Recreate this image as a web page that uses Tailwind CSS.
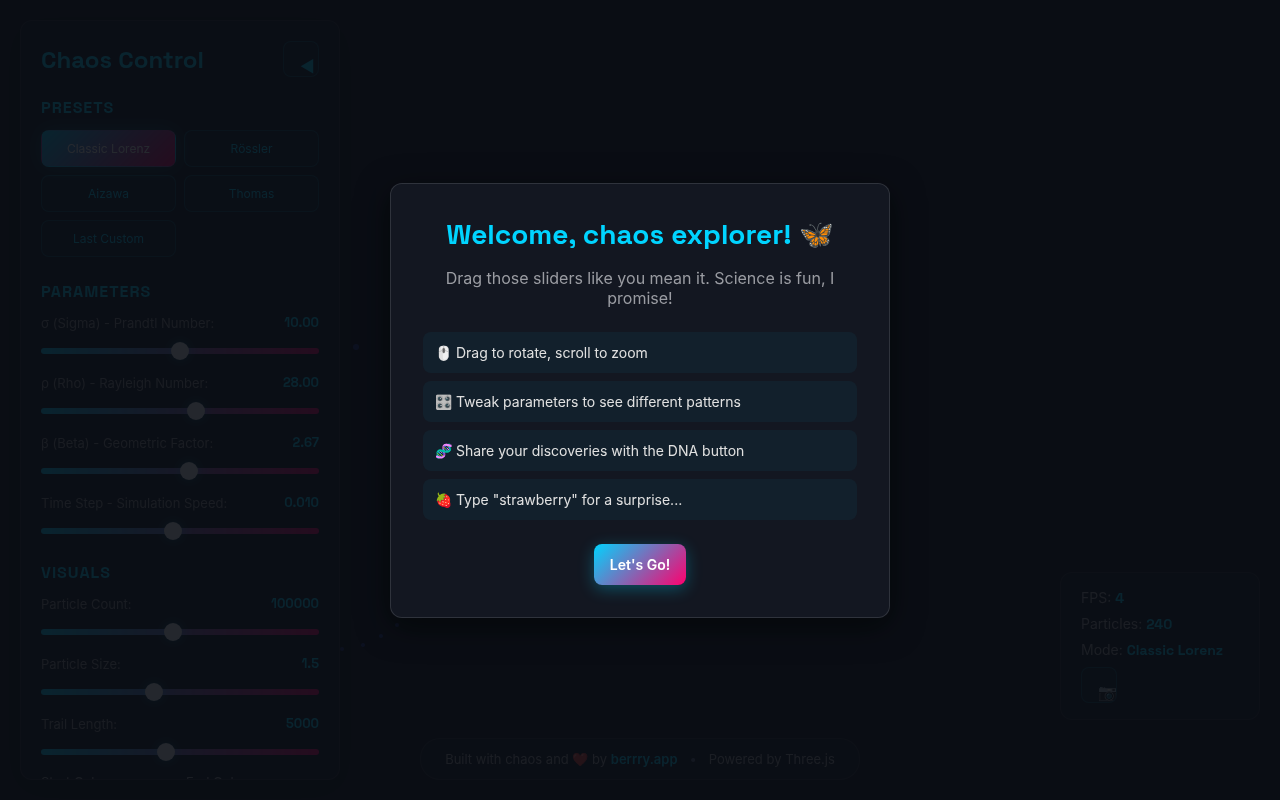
<!DOCTYPE html>
<html lang="en">
<head>
  <meta charset="UTF-8">
  <meta name="viewport" content="width=device-width, initial-scale=1">
  <title>Chaos Control</title>
  <script src="https://cdn.jsdelivr.net/npm/@tailwindcss/browser@4"></script>
</head>
<body class="min-h-screen overflow-hidden bg-[#0a0e14] font-['Inter',sans-serif] text-[#e0e0e0]">

  <!-- Attractor canvas -->
  <svg class="fixed inset-0 h-full w-full" aria-hidden="true">
    <g fill="#3a5fff" fill-opacity="0.5">
      <circle cx="356" cy="347" r="3" />
      <circle cx="342" cy="649" r="2" />
      <circle cx="363" cy="645" r="2" />
      <circle cx="381" cy="636" r="2" />
      <circle cx="397" cy="625" r="2" />
    </g>
  </svg>

  <!-- Control panel -->
  <aside class="fixed top-5 bottom-5 left-5 w-80 overflow-hidden rounded-xl border border-white/10 bg-[#10141c] p-5 shadow-[0_8px_32px_rgba(0,0,0,0.4)]">
    <header class="mb-[18px] flex items-start justify-between">
      <h1 class="font-['Space_Grotesk','Inter',sans-serif] text-2xl leading-[38px] font-bold text-[#00d4ff]">Chaos Control</h1>
      <button type="button" aria-label="Collapse panel" class="h-9 w-9 overflow-hidden rounded-lg border border-[#00d4ff]/25 bg-[#00d4ff]/5 px-4 py-3 text-base text-[#00d4ff]">◀</button>
    </header>

    <section class="mb-6">
      <h3 class="mb-3 font-['Space_Grotesk','Inter',sans-serif] text-base leading-[21px] font-semibold tracking-[1px] text-[#00d4ff] uppercase">Presets</h3>
      <div class="grid grid-cols-2 gap-2">
        <button type="button" class="h-[37px] rounded-lg border border-[#00d4ff]/25 bg-[linear-gradient(135deg,#00d4ff,#ff006e)] text-xs text-white shadow-[0_0_20px_rgba(0,212,255,0.3)]">Classic Lorenz</button>
        <button type="button" class="h-[37px] rounded-lg border border-[#00d4ff]/25 bg-[#00d4ff]/5 text-xs text-[#00d4ff]">Rössler</button>
        <button type="button" class="h-[37px] rounded-lg border border-[#00d4ff]/25 bg-[#00d4ff]/5 text-xs text-[#00d4ff]">Aizawa</button>
        <button type="button" class="h-[37px] rounded-lg border border-[#00d4ff]/25 bg-[#00d4ff]/5 text-xs text-[#00d4ff]">Thomas</button>
        <button type="button" class="h-[37px] rounded-lg border border-[#00d4ff]/25 bg-[#00d4ff]/5 text-xs text-[#00d4ff]">Last Custom</button>
      </div>
    </section>

    <section class="mb-[22px]">
      <h3 class="mb-3 font-['Space_Grotesk','Inter',sans-serif] text-base leading-[21px] font-semibold tracking-[1px] text-[#00d4ff] uppercase">Parameters</h3>
      <div id="parameters" class="flex flex-col gap-[14px]"></div>
    </section>

    <section>
      <h3 class="mb-3 font-['Space_Grotesk','Inter',sans-serif] text-base leading-[21px] font-semibold tracking-[1px] text-[#00d4ff] uppercase">Visuals</h3>
      <div id="visuals" class="flex flex-col gap-[14px]"></div>
      <div class="mt-3 grid grid-cols-2 gap-3 text-[13px] leading-[18px] text-[#a0a0a0]">
        <label>Start Color:
          <input type="color" value="#00d4ff" class="mt-2 block h-9 w-full">
        </label>
        <label>End Color:
          <input type="color" value="#ff006e" class="mt-2 block h-9 w-full">
        </label>
      </div>
    </section>
  </aside>

  <!-- Stats -->
  <section class="fixed right-5 bottom-20 w-[200px] rounded-xl border border-white/10 bg-[#10141c] px-5 py-4 text-sm leading-[18px] text-[#a0a0a0]">
    <p class="mb-2">FPS: <span class="font-['Space_Grotesk','Inter',sans-serif] font-bold text-[#00d4ff]">4</span></p>
    <p class="mb-2">Particles: <span class="font-['Space_Grotesk','Inter',sans-serif] font-bold text-[#00d4ff]">240</span></p>
    <p class="mb-2">Mode: <span class="font-['Space_Grotesk','Inter',sans-serif] font-bold text-[#00d4ff]">Classic Lorenz</span></p>
    <button type="button" aria-label="Take screenshot" class="block h-9 w-9 overflow-hidden rounded-lg border border-[#00d4ff]/25 bg-[#00d4ff]/5 px-4 py-3 text-base">📷</button>
  </section>

  <!-- Footer -->
  <footer class="fixed inset-x-0 bottom-5 flex justify-center">
    <p class="rounded-[20px] border border-white/10 bg-[#10141c] px-6 py-3 text-[13px] leading-4 text-[#a0a0a0]">
      Built with chaos and ❤️ by <a href="#" class="font-semibold text-[#00d4ff]">berrry.app</a><span class="mx-3 text-[#606880]">•</span>Powered by Three.js
    </p>
  </footer>

  <!-- Welcome dialog -->
  <div id="welcome" class="fixed inset-0 flex items-center justify-center bg-[#0a0e14]/89">
    <div role="dialog" aria-labelledby="welcomeTitle" class="w-full max-w-[500px] rounded-xl border border-white/12 bg-[#131721] p-8 text-center shadow-[0_8px_32px_rgba(0,0,0,0.5)]">
      <h2 id="welcomeTitle" class="mb-4 font-['Space_Grotesk','Inter',sans-serif] text-[28px] leading-9 font-bold text-[#00d4ff]">Welcome, chaos explorer! 🦋</h2>
      <p class="mb-6 text-base leading-5 text-[#9a9ca2]">Drag those sliders like you mean it. Science is fun, I promise!</p>
      <ul class="mb-6 flex flex-col gap-2 text-left text-sm leading-[17px]">
        <li class="rounded-lg bg-[#00d4ff]/5 p-3">🖱️ Drag to rotate, scroll to zoom</li>
        <li class="rounded-lg bg-[#00d4ff]/5 p-3">🎛️ Tweak parameters to see different patterns</li>
        <li class="rounded-lg bg-[#00d4ff]/5 p-3">🧬 Share your discoveries with the DNA button</li>
        <li class="rounded-lg bg-[#00d4ff]/5 p-3">🍓 Type "strawberry" for a surprise...</li>
      </ul>
      <button type="button" id="startBtn" class="rounded-lg bg-[linear-gradient(135deg,#00d4ff,#ff006e)] px-4 py-3 text-sm leading-[17px] font-semibold text-white shadow-[0_4px_16px_rgba(0,212,255,0.3)]">Let's Go!</button>
    </div>
  </div>

  <script>
    const parameters = [
      { id: 'sigma', label: 'σ (Sigma) - Prandtl Number:', value: '10.00', pos: 50 },
      { id: 'rho', label: 'ρ (Rho) - Rayleigh Number:', value: '28.00', pos: 56 },
      { id: 'beta', label: 'β (Beta) - Geometric Factor:', value: '2.67', pos: 53.4 },
      { id: 'speed', label: 'Time Step - Simulation Speed:', value: '0.010', pos: 47.4 }
    ];
    const visuals = [
      { id: 'count', label: 'Particle Count:', value: '100000', pos: 47.4 },
      { id: 'size', label: 'Particle Size:', value: '1.5', pos: 40 },
      { id: 'trail', label: 'Trail Length:', value: '5000', pos: 44.7 }
    ];

    function slider(item) {
      return `
        <div>
          <div class="mb-[10px] flex justify-between text-[13px] leading-[18px]">
            <label for="${item.id}" class="text-[#909090]">${item.label}</label>
            <output for="${item.id}" class="font-['Space_Grotesk','Inter',sans-serif] font-bold text-[#00d4ff]">${item.value}</output>
          </div>
          <input type="range" id="${item.id}" min="0" max="100" step="0.1" value="${item.pos}"
            class="block h-[18px] w-full appearance-none bg-transparent [&::-webkit-slider-runnable-track]:h-[6px] [&::-webkit-slider-runnable-track]:rounded-full [&::-webkit-slider-runnable-track]:bg-[linear-gradient(90deg,#00d4ff,#ff006e)] [&::-webkit-slider-thumb]:-mt-[6px] [&::-webkit-slider-thumb]:h-[18px] [&::-webkit-slider-thumb]:w-[18px] [&::-webkit-slider-thumb]:appearance-none [&::-webkit-slider-thumb]:rounded-full [&::-webkit-slider-thumb]:bg-[#f0f0f0] [&::-webkit-slider-thumb]:shadow-[0_0_12px_rgba(0,212,255,0.4)]">
        </div>`;
    }

    document.getElementById('parameters').innerHTML = parameters.map(slider).join('');
    document.getElementById('visuals').innerHTML = visuals.map(slider).join('');

    document.getElementById('startBtn').addEventListener('click', () => {
      document.getElementById('welcome').classList.add('hidden');
    });
  </script>
</body>
</html>
